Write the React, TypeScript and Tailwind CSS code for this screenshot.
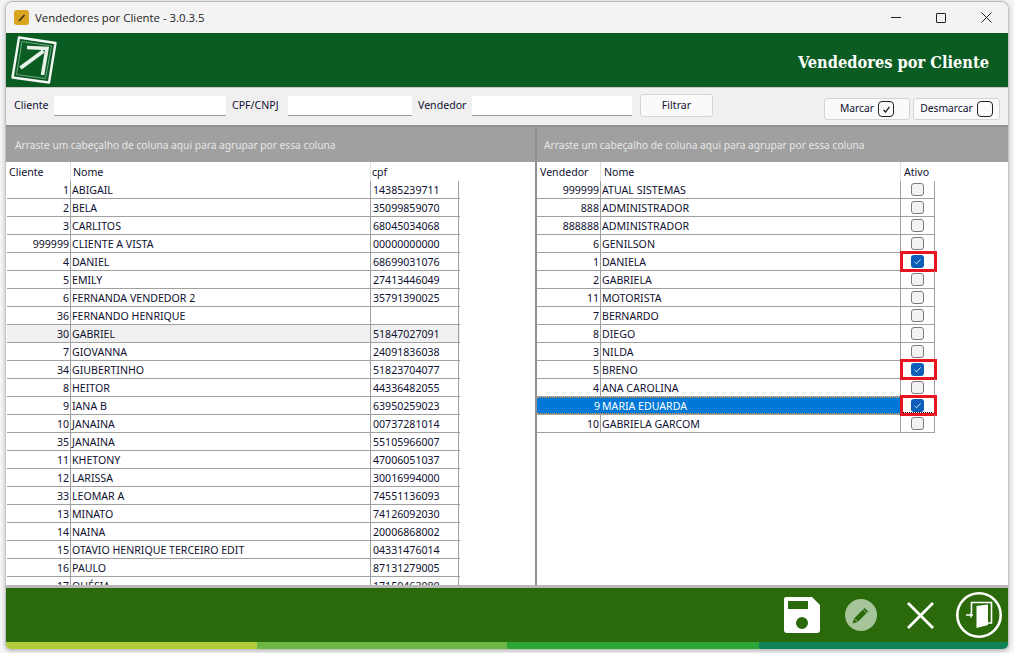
const leftRows: [string, string, string][] = [
  ["1", "ABIGAIL", "14385239711"],
  ["2", "BELA", "35099859070"],
  ["3", "CARLITOS", "68045034068"],
  ["999999", "CLIENTE A VISTA", "00000000000"],
  ["4", "DANIEL", "68699031076"],
  ["5", "EMILY", "27413446049"],
  ["6", "FERNANDA VENDEDOR 2", "35791390025"],
  ["36", "FERNANDO HENRIQUE", ""],
  ["30", "GABRIEL", "51847027091"],
  ["7", "GIOVANNA", "24091836038"],
  ["34", "GIUBERTINHO", "51823704077"],
  ["8", "HEITOR", "44336482055"],
  ["9", "IANA B", "63950259023"],
  ["10", "JANAINA", "00737281014"],
  ["35", "JANAINA", "55105966007"],
  ["11", "KHETONY", "47006051037"],
  ["12", "LARISSA", "30016994000"],
  ["33", "LEOMAR A", "74551136093"],
  ["13", "MINATO", "74126092030"],
  ["14", "NAINA", "20006868002"],
  ["15", "OTAVIO HENRIQUE TERCEIRO EDIT", "04331476014"],
  ["16", "PAULO", "87131279005"],
  ["17", "QUÉSIA", "17150463080"],
];

const rightRows: [string, string, boolean][] = [
  ["999999", "ATUAL SISTEMAS", false],
  ["888", "ADMINISTRADOR", false],
  ["888888", "ADMINISTRADOR", false],
  ["6", "GENILSON", false],
  ["1", "DANIELA", true],
  ["2", "GABRIELA", false],
  ["11", "MOTORISTA", false],
  ["7", "BERNARDO", false],
  ["8", "DIEGO", false],
  ["3", "NILDA", false],
  ["5", "BRENO", true],
  ["4", "ANA CAROLINA", false],
  ["9", "MARIA EDUARDA", true],
  ["10", "GABRIELA GARCOM", false],
];

const GROUP = "Arraste um cabeçalho de coluna aqui para agrupar por essa coluna";

function Box({ checked }: { checked: boolean }) {
  if (checked) {
    return (
      <span className="flex h-[13px] w-[13px] items-center justify-center rounded-[3px] bg-[#0b5fb8]">
        <svg width="9" height="9" viewBox="0 0 9 9" fill="none">
          <path d="M1.5 4.8 3.6 6.8 7.6 2.4" stroke="#cfe0f5" strokeWidth="1" />
        </svg>
      </span>
    );
  }
  return <span className="h-[13px] w-[13px] rounded-[3px] border border-[#7a7a7a] bg-[#f3f3f3]" />;
}

function Field({ label, width, labelClass }: { label: string; width: string; labelClass: string }) {
  return (
    <>
      <span className={labelClass}>{label}</span>
      <span className={`h-[20px] border-b border-[#9a9a9a] bg-white ${width}`} />
    </>
  );
}

export default function App() {
  return (
    <div className="h-[653px] w-[1014px] overflow-hidden bg-[#f5f5f5] font-['Noto_Sans','Liberation_Sans',sans-serif] text-[10.6px] text-[#101030]">
      <div className="ml-[5px] mt-[1px] flex h-[649px] w-[1004px] flex-col overflow-hidden rounded-t-[8px] rounded-b-[6px] border border-[#c4c4c4] border-t-[#b8b8b8] bg-[#f0f0f0] shadow-[0_1px_4px_rgba(0,0,0,0.25)]">
        <div className="flex h-[31px] shrink-0 items-center bg-[#f3f3f3]">
          <span className="ml-[8px] flex h-[15px] w-[15px] items-center justify-center rounded-[3px] bg-[#d9a520]">
            <svg width="11" height="11" viewBox="0 0 11 11" fill="none">
              <path d="M2.5 8.5 8 2.5 9 3.5 3.5 9.5Z" fill="#2b2416" />
            </svg>
          </span>
          <span className="ml-[6px] font-['Open_Sans','Noto_Sans',sans-serif] text-[11.4px] text-[#222]">
            Vendedores por Cliente - 3.0.3.5
          </span>
          <div className="ml-auto flex items-center">
            <span className="mr-[35px] h-px w-[10px] bg-[#222]" />
            <span className="mr-[35px] h-[10px] w-[10px] rounded-[1px] border border-[#222]" />
            <svg className="mr-[16px]" width="11" height="11" viewBox="0 0 11 11" fill="none">
              <path d="M.5.5l10 10M10.5.5l-10 10" stroke="#222" strokeWidth="1" />
            </svg>
          </div>
        </div>

        <div className="flex h-[54px] shrink-0 items-center justify-between bg-[#0a5c22] pl-[2px] pr-[19px]">
          <svg width="50" height="50" viewBox="0 0 50 50" fill="none">
            <path d="M11 2.5 47.5 8 41 47.5 4.5 42.5Z" stroke="#f2f7f3" strokeWidth="2.4" strokeLinejoin="round" />
            <path d="M14 6.5 43.5 11 37.5 43.5 8.5 39.5Z" stroke="#8db79a" strokeWidth="0.8" strokeLinejoin="round" />
            <path d="M12.5 33 35.5 16" stroke="#e9f1eb" strokeWidth="4" />
            <path d="M19 12.5 39 13.5 34.5 40" stroke="#e9f1eb" strokeWidth="3.6" />
          </svg>
          <span className="pt-[6px] font-['DejaVu_Serif_Condensed','DejaVu_Serif',serif] text-[16.25px] font-bold text-white">
            Vendedores por Cliente
          </span>
        </div>

        <div className="flex h-[38px] shrink-0 items-center border-t border-[#c8c8c8] pb-[2px] pl-[8px]">
          <Field label="Cliente" labelClass="w-[40px]" width="w-[172px]" />
          <Field label="CPF/CNPJ" labelClass="ml-[6px] w-[56px]" width="w-[124px]" />
          <Field label="Vendedor" labelClass="ml-[6px] w-[54px]" width="w-[160px]" />
          <span className="ml-[8px] flex h-[23px] w-[73px] items-center justify-center rounded-[3px] border border-[#d4d4d4] bg-[#fafafa]">
            Filtrar
          </span>
          <span className="ml-[111px] mt-[7px] flex h-[22px] w-[86px] items-center justify-center gap-[4px] rounded-[3px] border border-[#d4d4d4] bg-[#fafafa] text-[10.3px]">
            Marcar
            <span className="flex h-[16px] w-[16px] items-center justify-center rounded-[4px] border border-[#222]">
              <svg width="9" height="9" viewBox="0 0 9 9" fill="none">
                <path d="M1.5 4.8 3.5 7 7.5 1.8" stroke="#111" strokeWidth="1.2" />
              </svg>
            </span>
          </span>
          <span className="ml-[3px] mt-[7px] flex h-[22px] w-[87px] items-center justify-center gap-[4px] rounded-[3px] border border-[#d4d4d4] bg-[#fafafa] text-[10.3px]">
            Desmarcar
            <span className="h-[16px] w-[16px] rounded-[4px] border border-[#222]" />
          </span>
        </div>

        <div className="flex h-[463px] shrink-0 border-t-2 border-b-[3px] border-t-[#8f9093] border-b-[#b8b8b8] bg-white">
          <div className="flex w-[529px] shrink-0 flex-col">
            <div className="flex h-[35px] shrink-0 items-center bg-[#a0a0a0] pl-[9px] pt-[2px] text-[10.2px] text-[#e6e6e6]">{GROUP}</div>
            <div className="flex h-[19px] shrink-0 pl-[1px]">
              <span className="w-[64px] border-r border-[#e2e2e2] pl-[2px] pt-[3px]">Cliente</span>
              <span className="w-[300px] border-r border-[#e2e2e2] pl-[2px] pt-[3px]">Nome</span>
              <span className="pl-[1px] pt-[3px]">cpf</span>
            </div>
            <div className="min-h-0 flex-1 overflow-hidden pl-[1px]">
              {leftRows.map(([id, name, cpf]) => (
                <div
                  key={id + name}
                  className={`flex h-[18px] w-[453px] items-center border-b border-[#a0a0a0] ${
                    id === "30" ? "bg-[#f0f0f0]" : ""
                  }`}
                >
                  <span className="flex h-full w-[64px] items-center justify-end border-r border-[#a0a0a0] pr-[1px] pt-[2px]">{id}</span>
                  <span className="flex h-full w-[300px] items-center border-r border-[#a0a0a0] pl-[1px] pt-[2px]">{name}</span>
                  <span className="flex h-full w-[88px] items-center border-r border-[#a0a0a0] pl-[2px] pt-[2px]">{cpf}</span>
                </div>
              ))}
            </div>
          </div>

          <div className="w-[2px] shrink-0 bg-[#8f9093]" />

          <div className="flex min-w-0 flex-1 flex-col">
            <div className="flex h-[35px] shrink-0 items-center bg-[#a0a0a0] pl-[7px] pt-[2px] text-[10.2px] text-[#e6e6e6]">{GROUP}</div>
            <div className="flex h-[19px] shrink-0">
              <span className="w-[64px] border-r border-[#e2e2e2] pl-[3px] pt-[3px]">Vendedor</span>
              <span className="w-[300px] border-r border-[#e2e2e2] pl-[3px] pt-[3px]">Nome</span>
              <span className="pl-[3px] pt-[3px]">Ativo</span>
            </div>
            <div className="min-h-0 flex-1 overflow-hidden">
              {rightRows.map(([id, name, active]) => {
                const selected = id === "9";
                return (
                  <div key={id + name} className="flex h-[18px] w-[398px] items-center border-b border-[#a0a0a0]">
                    <span
                      className={`flex h-full w-[364px] items-center ${
                        selected ? "border-y border-dotted border-[#e89a4a] bg-[#0078d7] text-white" : ""
                      }`}
                    >
                      <span className={`flex h-full w-[64px] items-center justify-end pr-[1px] pt-[2px] ${selected ? "" : "border-r border-[#a0a0a0]"}`}>{id}</span>
                      <span className={`flex h-full flex-1 items-center pl-[1px] pt-[2px] ${selected ? "" : "border-r border-[#a0a0a0]"}`}>{name}</span>
                    </span>
                    <span className="relative flex h-full w-[34px] items-center justify-center border-r border-[#a0a0a0] pr-[1px]">
                      <Box checked={active} />
                      {selected && (
                        <span className="absolute bottom-[1px] left-[2px] right-[2px] border-b border-dotted border-black" />
                      )}
                      {active && (
                        <span className="absolute -left-[1px] -top-[2px] h-[21px] w-[37px] border-[3px] border-[#e8141f]" />
                      )}
                    </span>
                  </div>
                );
              })}
            </div>
          </div>
        </div>

        <div className="flex h-[54px] shrink-0 items-center justify-end bg-[#2a6a0a]">
          <svg width="36" height="36" viewBox="0 0 36 36" className="mr-[25px]">
            <path fillRule="evenodd" fill="#fff" d="M2 0H28L36 8V33A3 3 0 0 1 33 36H3A3 3 0 0 1 0 33V2A2 2 0 0 1 2 0ZM4 4V12H24V4ZM18 20A6 6 0 1 0 18 32A6 6 0 1 0 18 20Z" />
          </svg>
          <svg width="32" height="32" viewBox="0 0 32 32" className="mr-[30px]">
            <circle cx="16" cy="16" r="16" fill="#a6c59a" />
            <path fill="#2a6a0a" d="M7.5 24.5 9 19.5 19.5 9 23.2 12.6 12.7 23Z" />
            <path stroke="#a6c59a" strokeWidth="0.9" fill="none" d="M18 10.5 21.7 14.2M9.3 19.5 12.7 22.9" />
          </svg>
          <svg width="27" height="27" viewBox="0 0 27 27" className="mr-[22px]" fill="none">
            <path d="M1 1 26 26M26 1 1 26" stroke="#fff" strokeWidth="2.8" />
          </svg>
          <svg width="46" height="46" viewBox="0 0 46 46" className="mr-[6px]" fill="none">
            <circle cx="23" cy="23" r="21.7" stroke="#fff" strokeWidth="2.6" />
            <path d="M10 23H17M15 20.5V25.5" stroke="#fff" strokeWidth="1.5" />
            <path d="M15.5 21V10.5H35.5V31H32" stroke="#fff" strokeWidth="1.6" />
            <path fill="#fff" d="M20.5 14 32 12.5V33L20.5 36Z" />
          </svg>
        </div>

        <div className="flex h-[7px] shrink-0">
          <span className="w-[251px] bg-[#b2cb3a]" />
          <span className="w-[250px] bg-[#6fb744]" />
          <span className="w-[252px] bg-[#2ea637]" />
          <span className="flex-1 bg-[#0e8355]" />
        </div>
      </div>
    </div>
  );
}
